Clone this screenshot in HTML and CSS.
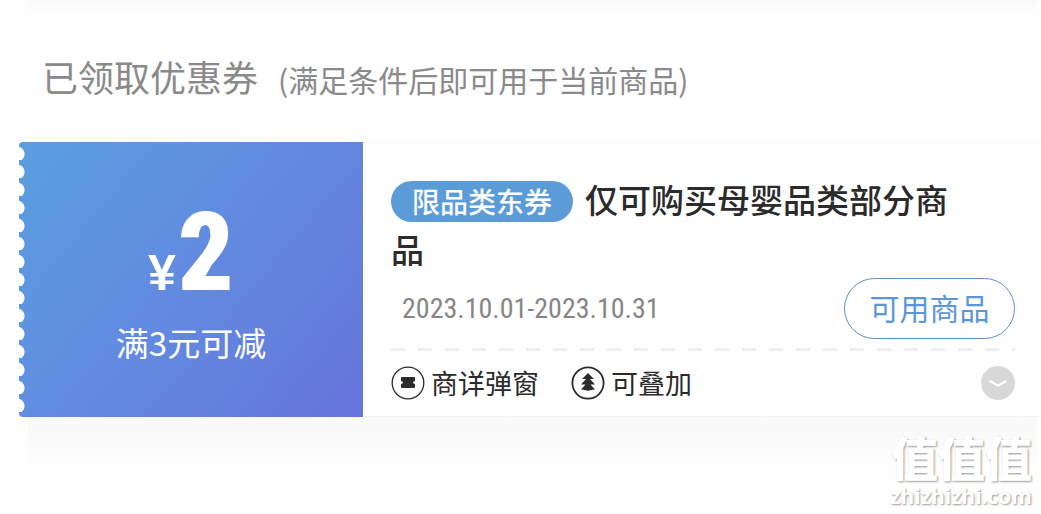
FILE: index.html
```
<!DOCTYPE html>
<html lang="zh-CN">
<head>
    <meta charset="UTF-8">
    <meta name="viewport" content="width=device-width, initial-scale=1.0">
    <title>已领取优惠券</title>
    <link rel="stylesheet" href="styles.css">
</head>
<body>

<div class="strip strip-top"></div>

<h2 class="heading">已领取优惠券 <small class="heading-note">(满足条件后即可用于当前商品)</small></h2>

<!-- 优惠券 -->
<div class="coupon">
    <div class="coupon-value">
        <div class="price"><span class="price-unit">¥</span><span class="price-num">2</span></div>
        <div class="price-limit">满3元可减</div>
    </div>

    <div class="coupon-info">
        <div class="coupon-title"><span class="coupon-type">限品类东券</span>仅可购买母婴品类部分商品</div>
        <div class="coupon-row">
            <span class="coupon-date">2023.10.01-2023.10.31</span>
            <button type="button" class="btn-use">可用商品</button>
        </div>
        <div class="divider"></div>
        <div class="coupon-tags">
            <span class="tag">
                <svg class="tag-icon" viewBox="0 0 34 34">
                    <circle cx="17" cy="17" r="15.8" fill="none" stroke="#2b2b2b" stroke-width="1.3"/>
                    <path d="M11 11h12q1 0 1 1v3q-2 .3-2 1.500t2 1.500v3q0 1-1 1H11q-1 0-1-1v-3q2-.3 2-1.500T10 15v-3q0-1 1-1z" fill="#2b2b2b"/>
                </svg>
                商详弹窗
            </span>
            <span class="tag">
                <svg class="tag-icon" viewBox="0 0 34 34">
                    <circle cx="17" cy="17" r="15.600" fill="none" stroke="#2b2b2b" stroke-width="1.8"/>
                    <path d="M17 7l6 6h-4l5 5.500h-4.500l4.500 5q-2.500 0-4.500.8-2.500.8-5 0-2-.8-4.500-.8l4.500-5H10l5-5.500h-4z" fill="#2b2b2b"/>
                </svg>
                可叠加
            </span>
            <button type="button" class="btn-more" aria-label="展开">
                <svg viewBox="0 0 34 34">
                    <path d="M9.500 15.500l7.500 4 7.500-4" fill="none" stroke="#fff" stroke-width="2.400" stroke-linecap="round" stroke-linejoin="round"/>
                </svg>
            </button>
        </div>
    </div>
</div>

<div class="strip strip-bottom"></div>

<!-- 水印 -->
<div class="watermark">
    <div class="watermark-name">值值值</div>
    <div class="watermark-url">zhizhizhi.com</div>
</div>

</body>
</html>
```
FILE: styles.css
```
* {
    box-sizing: border-box;
}

body {
    position: relative;
    margin: 0;
    min-height: 100vh;
    background: #fefefe;
    color: #2b2b2b;
    font-family: "Noto Sans CJK SC", sans-serif;
}

/* 上下浅灰条 */
.strip {
    margin: 0 4px 0 28px;
}

.strip-top {
    height: 14px;
    background: linear-gradient(#f9f9f9, #fefefe);
}

.strip-bottom {
    height: 48px;
    background: linear-gradient(#f9f9f9, #fbfbfb 70%, #fefefe);
}

.heading {
    margin: 0;
    padding: 36px 42px 37px;
    color: #8a8a8a;
    font-size: 36px;
    font-weight: 400;
    line-height: 52px;
}

.heading-note {
    margin-left: 12px;
    font-size: 30px;
}

.coupon {
    display: flex;
    margin-left: 19px;
}

/* 左侧金额，带锯齿边 */
.coupon-value {
    display: flex;
    flex-direction: column;
    align-items: center;
    flex: none;
    width: 344px;
    padding-top: 65px;
    color: #fff;
    background:
        radial-gradient(circle at -2px 12px, #fefefe 7px, transparent 8px) 0 0 / 8px 18px repeat-y,
        linear-gradient(130deg, #5a9fe0, #628ae0 50%, #6674da);
    border-radius: 4px 0 0 4px;
}

.price {
    display: flex;
    align-items: baseline;
    gap: 2px;
    font-weight: 900;
    line-height: 92px;
}

.price-unit {
    font-family: "Liberation Sans", sans-serif;
    font-size: 50px;
}

.price-num {
    font-family: "Roboto Condensed", "Roboto", sans-serif;
    font-size: 110px;
}

.price-limit {
    font-size: 33px;
    line-height: 46px;
}

.coupon-info {
    flex: 1;
    padding: 31px 26px 13px 28px;
    border-top: 1px solid #f3f3f3;
    border-bottom: 1px solid #f3f3f3;
}

.coupon-title {
    padding-right: 60px;
    font-size: 33px;
    font-weight: 500;
    line-height: 50px;
}

.coupon-type {
    display: inline-block;
    margin-right: 12px;
    padding: 0 21px;
    border-radius: 21px;
    background: #5b9bd8;
    color: #fff;
    font-size: 28px;
    line-height: 41px;
}

.coupon-row {
    display: flex;
    align-items: center;
    justify-content: space-between;
    margin-top: 4px;
    padding-left: 11px;
}

.coupon-date {
    color: #868686;
    font-family: "Roboto Condensed", "Noto Sans CJK SC", sans-serif;
    font-size: 28px;
    font-weight: 400;
}

.btn-use {
    width: 171px;
    height: 61px;
    padding: 0 0 4px;
    border: 1px solid #5b8fc8;
    border-radius: 31px;
    background: none;
    color: #5b97d6;
    font-family: inherit;
    font-size: 30px;
    font-weight: 400;
}

.divider {
    height: 3px;
    margin: 9px 0 12px;
    background: repeating-linear-gradient(to right, #eee 0 14px, transparent 14px 27px);
}

.coupon-tags {
    display: flex;
    align-items: center;
    gap: 32px;
    font-size: 27px;
    line-height: 40px;
}

.tag {
    display: flex;
    align-items: center;
    gap: 6px;
}

.tag-icon {
    width: 34px;
    height: 34px;
}

.btn-more {
    width: 34px;
    height: 34px;
    margin-left: auto;
    padding: 0;
    border: 0;
    border-radius: 50%;
    background: #d8d8d8;
}

.btn-more svg {
    display: block;
}

.watermark {
    position: absolute;
    right: 9px;
    bottom: 4px;
    color: #fff;
    text-align: right;
    text-shadow: 1px 1px 2px #999;
}

.watermark-name {
    font-size: 47px;
    font-weight: 900;
    line-height: 52px;
}

.watermark-url {
    font-family: "Open Sans", sans-serif;
    font-size: 21px;
    font-weight: 700;
    line-height: 28px;
}
```
